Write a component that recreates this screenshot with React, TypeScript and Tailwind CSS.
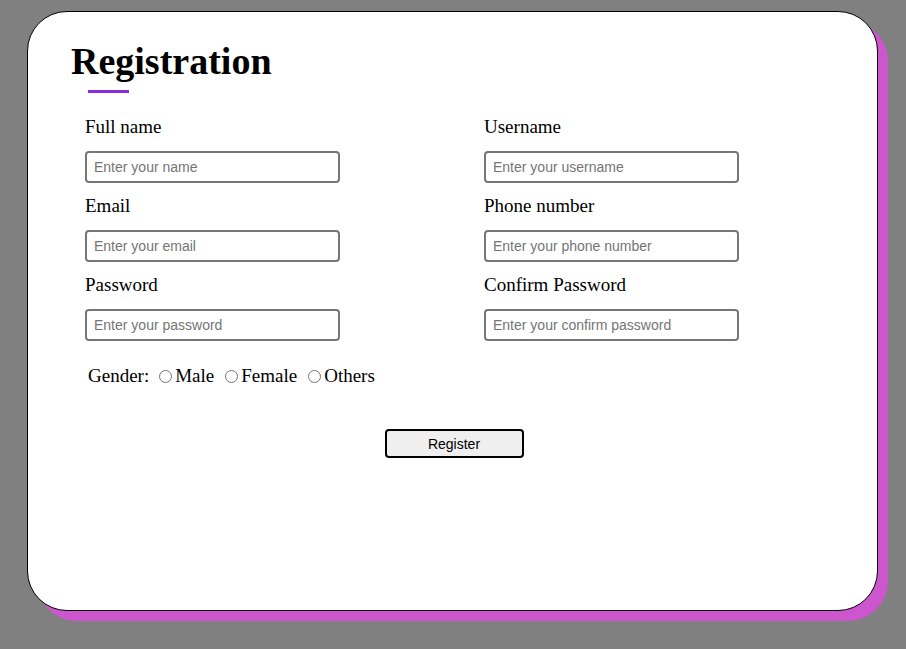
const serif = { fontFamily: '"Liberation Serif", "Times New Roman", serif' }

function Field({ label, placeholder }: { label: string; placeholder: string }) {
  return (
    <div className="flex flex-col">
      <label className="text-[19px] leading-[24px] text-black">{label}</label>
      <input
        type="text"
        placeholder={placeholder}
        className="mt-[12px] h-[32px] w-[255px] rounded-[4px] border-2 border-[#767676] px-[7px] text-[14px] text-black placeholder:text-[#757575] outline-none font-['Liberation_Sans',Arial,sans-serif]"
      />
    </div>
  )
}

function Radio({ label, last }: { label: string; last?: boolean }) {
  return (
    <label className={`flex items-center ${last ? '' : 'mr-[11px]'}`}>
      <input type="radio" name="gender" className="mr-[3px] h-[13px] w-[13px] accent-gray-500" />
      {label}
    </label>
  )
}

export default function App() {
  return (
    <div className="min-h-[649px] bg-[#808080] pl-[27px] pt-[11px]" style={serif}>
      <div className="relative h-[600px] w-[851px] rounded-[40px] border border-black bg-white shadow-[10px_10px_0_#cd55cd]">
        <div className="pl-[43px] pt-[27px]">
          <h1 className="text-[38px] font-bold leading-[44px] text-black">Registration</h1>
          <div className="ml-[17px] mt-[7px] h-[3px] w-[41px] bg-[#8a2be2]" />
        </div>

        <form className="pl-[57px] pt-[22px]">
          <div className="grid grid-cols-[399px_255px] gap-y-[11px]">
            <Field label="Full name" placeholder="Enter your name" />
            <Field label="Username" placeholder="Enter your username" />
            <Field label="Email" placeholder="Enter your email" />
            <Field label="Phone number" placeholder="Enter your phone number" />
            <Field label="Password" placeholder="Enter your password" />
            <Field label="Confirm Password" placeholder="Enter your confirm password" />
          </div>

          <div className="ml-[3px] mt-[24px] flex h-[22px] items-center text-[19px] leading-[22px] text-black">
            <span className="mr-[10px]">Gender:</span>
            <Radio label="Male" />
            <Radio label="Female" />
            <Radio label="Others" last />
          </div>

          <div className="mt-[42px] flex w-[738px] justify-center">
            <button
              type="button"
              className="h-[29px] w-[139px] rounded-[4px] border-2 border-black bg-[#efefef] text-[14px] leading-none text-black font-['Liberation_Sans',Arial,sans-serif]"
            >
              Register
            </button>
          </div>
        </form>
      </div>
    </div>
  )
}
